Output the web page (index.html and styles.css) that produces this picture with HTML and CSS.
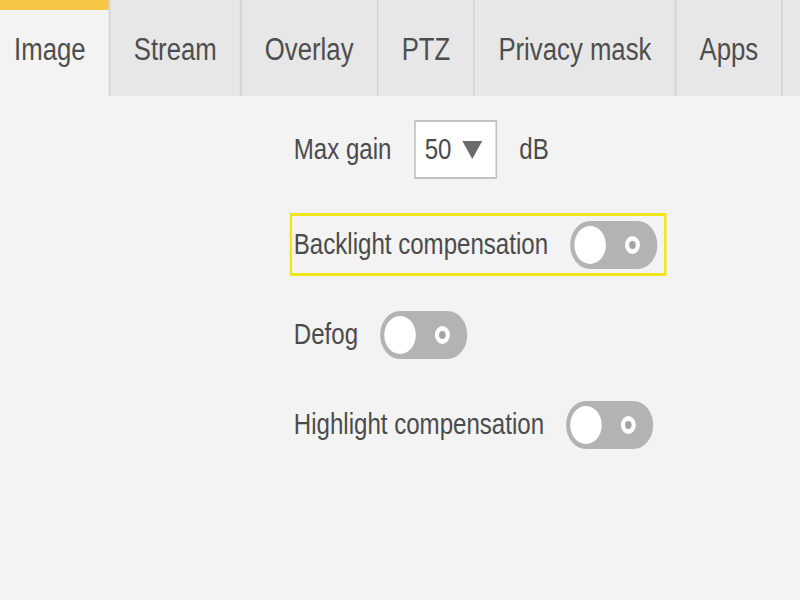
FILE: index.html
```html
<!DOCTYPE html>
<html lang="en">
<head>
    <meta charset="UTF-8">
    <meta name="viewport" content="width=device-width, initial-scale=1.0">
    <title>Image settings</title>
    <link rel="stylesheet" href="styles.css">
</head>
<body>
    <div class="screen">
        <nav class="tabs">
            <div class="tab active">Image</div>
            <div class="tab">Stream</div>
            <div class="tab">Overlay</div>
            <div class="tab">PTZ</div>
            <div class="tab">Privacy mask</div>
            <div class="tab">Apps</div>
            <div class="tab more"></div>
        </nav>
        <div class="settings">
            <div class="setting first">
                <span class="label">Max gain</span>
                <div class="select">
                    <span>50</span>
                    <svg width="24" height="18" viewBox="0 0 24 18"><polygon points="0,0 24,0 12,18" fill="#6b6b6b"/></svg>
                </div>
                <span class="label">dB</span>
            </div>
            <div class="setting focused">
                <span class="label">Backlight compensation</span>
                <div class="toggle"><span class="knob"></span><span class="ring"></span></div>
            </div>
            <div class="setting">
                <span class="label">Defog</span>
                <div class="toggle"><span class="knob"></span><span class="ring"></span></div>
            </div>
            <div class="setting">
                <span class="label">Highlight compensation</span>
                <div class="toggle"><span class="knob"></span><span class="ring"></span></div>
            </div>
        </div>
    </div>
</body>
</html>
```

FILE: styles.css
```css
body {
    margin: 0;
    background-color: #f3f3f3;
    font-family: "Liberation Sans", Arial, sans-serif;
    color: #4b4b4b;
    overflow: hidden;
}
/* the device UI is drawn a bit narrow */
.screen {
    width: 964px;
    transform: scaleX(0.83);
    transform-origin: 0 0;
}
.tabs {
    display: flex;
    height: 96px;
    background-color: #e7e7e7;
    white-space: nowrap;
}
.tab {
    display: flex;
    align-items: center;
    padding: 3px 28px 0;
    font-size: 31px;
    border-left: 2px solid #d3d3d3;
    color: #4e4e4e;
}
.tab.active {
    padding-left: 17px;
    border-left: none;
    background-color: #f3f3f3;
    box-shadow: inset 0 10px 0 #f6c646;
}
.tab.more {
    flex: 1;
}
.settings {
    display: flex;
    flex-direction: column;
    align-items: flex-start;
    gap: 27px;
    padding: 22px 0 0 349px;
}
.setting {
    display: flex;
    align-items: center;
    gap: 27px;
    height: 63px;
    box-sizing: border-box;
    border: 3px solid transparent;
    padding: 0 8px 0 2px;
    font-size: 29px;
}
.setting.first {
    margin-bottom: 5px;
}
.setting.focused {
    border-color: #f1e51c;
}
.select {
    display: flex;
    align-items: center;
    gap: 13px;
    width: 100px;
    height: 59px;
    box-sizing: border-box;
    padding-left: 11px;
    background-color: white;
    border: 2px solid #c2c2c2;
}
.toggle {
    display: flex;
    align-items: center;
    justify-content: space-between;
    width: 105px;
    height: 48px;
    box-sizing: border-box;
    padding: 0 21px 0 5px;
    background-color: #b3b3b3;
    border-radius: 24px;
}
.knob {
    width: 38px;
    height: 38px;
    border-radius: 50%;
    background-color: white;
}
.ring {
    width: 18px;
    height: 18px;
    box-sizing: border-box;
    border-radius: 50%;
    border: 5px solid white;
    background-color: #a4a4a4;
}
```
